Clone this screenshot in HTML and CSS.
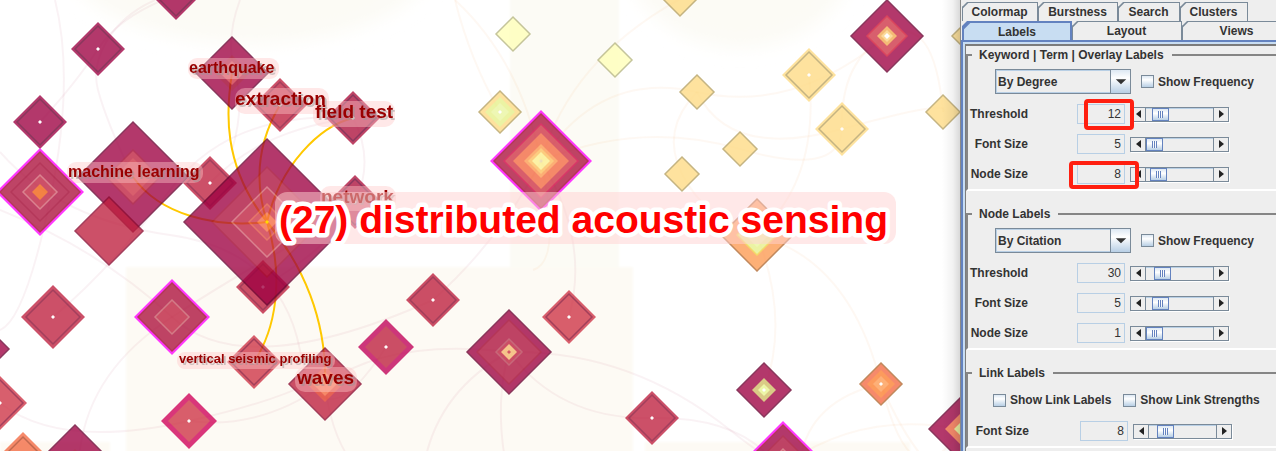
FILE: index.html
```html
<!DOCTYPE html>
<html lang="en">
<head>
<meta charset="utf-8">
<title>Keyword network</title>
<link rel="stylesheet" href="styles.css">
</head>
<body>
<main class="graph">
<svg class="network" xmlns="http://www.w3.org/2000/svg" role="img" aria-label="Keyword network">
  <defs>
    <filter id="soft"><feGaussianBlur stdDeviation="9"/></filter>
    <filter id="edge"><feGaussianBlur stdDeviation="1"/></filter>
  </defs>
  <g class="region">
    <ellipse cx="250" cy="-50" rx="190" ry="94" filter="url(#soft)"/>
    <ellipse cx="740" cy="-60" rx="120" ry="108" filter="url(#soft)"/>
    <rect x="510" y="-5" width="109" height="275" filter="url(#edge)"/>
    <rect class="warm" x="126" y="267" width="507" height="200" filter="url(#edge)"/>
    <rect class="warm" x="645" y="442" width="265" height="20" filter="url(#edge)"/>
    <rect class="warm" x="0" y="442" width="110" height="20" filter="url(#edge)"/>
  </g>
  <g class="faint">
    <path d="M55 0Q75 80 50 200T0 330"/>
    <path d="M155 0C110 20 90 60 98 90S120 150 133 177"/>
    <path d="M176 -5Q120 15 98 49T40 122"/>
    <path d="M240 0Q225 40 235 73T232 150"/>
    <path d="M0 152Q60 220 170 235T300 350T386 347"/>
    <path d="M0 210Q100 250 172 317T433 300"/>
    <path d="M53 317Q110 270 170 190T353 118"/>
    <path d="M80 450Q90 370 172 317T320 230"/>
    <path d="M0 403Q60 450 189 421T340 360"/>
    <path d="M189 421Q260 430 325 384T509 352"/>
    <path d="M325 384Q330 430 350 460"/>
    <path d="M509 352Q440 390 425 460"/>
    <path d="M509 352Q560 420 652 418T780 470"/>
    <path d="M509 352Q630 350 730 430T860 470"/>
    <path d="M433 300Q500 240 541 161"/>
    <path d="M569 317Q590 240 541 161"/>
    <path d="M509 352Q495 400 505 460"/>
    <path d="M353 118Q375 160 355 202T263 287"/>
    <path d="M210 183Q260 130 353 118"/>
  </g>
  <g class="faint pale">
    <path d="M455 0Q470 60 500 112"/>
    <path d="M455 0Q520 60 541 161T533 270"/>
    <path d="M541 161Q570 60 680 -1"/>
    <path d="M541 161Q640 120 740 149T842 129"/>
    <path d="M541 161Q600 70 697 92T887 36"/>
    <path d="M697 92Q660 130 682 174T757 235"/>
    <path d="M697 92Q730 160 842 129T943 112"/>
    <path d="M809 75Q820 180 757 235"/>
    <path d="M757 235Q790 320 764 390"/>
    <path d="M842 129Q840 60 887 36T943 112"/>
    <path d="M757 235Q850 260 881 384T960 429"/>
    <path d="M881 384Q810 400 800 460"/>
    <path d="M783 466Q860 410 960 429"/>
    <path d="M881 384Q900 430 925 460"/>
  </g>
  <g class="strong">
    <path d="M232 73C226 110 222 165 267 222"/>
    <path d="M280 105Q247 160 267 222"/>
    <path d="M353 118C320 126 280 165 267 222"/>
    <path d="M133 177C160 215 215 228 267 222"/>
    <path d="M254 362C275 330 285 280 267 222"/>
    <path d="M325 384C327 320 303 265 267 222"/>
  </g>
  <g id="nodes"></g>
  <g class="pill">
    <rect x="188" y="58" width="91" height="21" rx="9"/>
    <rect x="235" y="88" width="94" height="26" rx="10"/>
    <rect x="313" y="101" width="82" height="26" rx="10"/>
    <rect x="320" y="186" width="76" height="25" rx="10"/>
    <rect x="67" y="162" width="136" height="21" rx="9"/>
    <rect x="177" y="352" width="158" height="17" rx="8"/>
    <rect x="295" y="367" width="62" height="25" rx="10"/>
  </g>
  <g class="term">
    <text class="t16" x="189" y="73">earthquake</text>
    <text class="t19" x="235" y="105">extraction</text>
    <text class="t19" x="315" y="118">field test</text>
    <text class="t19" x="321" y="203">network</text>
    <text class="t16" x="68" y="177">machine learning</text>
    <text class="t13" x="179" y="363">vertical seismic profiling</text>
    <text class="t19" x="297" y="384">waves</text>
  </g>
  <rect class="focus-pill" x="275" y="192" width="621" height="52" rx="12"/>
  <text class="focus" x="279" y="233">(27) distributed acoustic sensing</text>
</svg>
</main>

<aside class="panel">
  <nav class="tabs">
    <div class="tab-row">
      <button class="tab w-colormap">Colormap</button><button class="tab w-burst">Burstness</button><button class="tab w-search">Search</button><button class="tab w-clusters">Clusters</button>
    </div>
    <div class="tab-row">
      <button class="tab w-wide selected">Labels</button><button class="tab w-wide">Layout</button><button class="tab w-wide">Views</button>
    </div>
  </nav>
  <div class="sheet">
    <fieldset class="group">
      <legend>Keyword | Term | Overlay Labels</legend>
      <div class="mode">
        <span class="combo"><select aria-label="Term label mode"><option>By Degree</option></select><svg viewBox="0 0 20 23"><path d="M5 9h11l-5.500 5.500z"/></svg></span>
        <label class="check"><input type="checkbox">Show Frequency</label>
      </div>
      <div class="row"><label for="a1">Threshold</label><input class="num" id="a1" value="12"><span class="slider"><button class="prev" aria-label="Less"></button><input type="range" min="0" max="51" value="6" aria-label="Threshold"><button class="next" aria-label="More"></button></span><span class="mark mark-a"></span></div>
      <div class="row"><label for="a2">Font Size</label><input class="num" id="a2" value="5"><span class="slider"><button class="prev" aria-label="Less"></button><input type="range" min="0" max="51" value="0" aria-label="Font Size"><button class="next" aria-label="More"></button></span></div>
      <div class="row"><label for="a3">Node Size</label><input class="num" id="a3" value="8"><span class="slider"><button class="prev" aria-label="Less"></button><input type="range" min="0" max="51" value="4" aria-label="Node Size"><button class="next" aria-label="More"></button></span><span class="mark mark-b"></span></div>
    </fieldset>
    <fieldset class="group">
      <legend>Node Labels</legend>
      <div class="mode">
        <span class="combo"><select aria-label="Node label mode"><option>By Citation</option></select><svg viewBox="0 0 20 23"><path d="M5 9h11l-5.500 5.500z"/></svg></span>
        <label class="check"><input type="checkbox">Show Frequency</label>
      </div>
      <div class="row"><label for="b1">Threshold</label><input class="num" id="b1" value="30"><span class="slider"><button class="prev" aria-label="Less"></button><input type="range" min="0" max="51" value="8" aria-label="Threshold"><button class="next" aria-label="More"></button></span></div>
      <div class="row"><label for="b2">Font Size</label><input class="num" id="b2" value="5"><span class="slider"><button class="prev" aria-label="Less"></button><input type="range" min="0" max="51" value="6" aria-label="Font Size"><button class="next" aria-label="More"></button></span></div>
      <div class="row"><label for="b3">Node Size</label><input class="num" id="b3" value="1"><span class="slider"><button class="prev" aria-label="Less"></button><input type="range" min="0" max="51" value="0" aria-label="Node Size"><button class="next" aria-label="More"></button></span></div>
    </fieldset>
    <fieldset class="group links">
      <legend>Link Labels</legend>
      <div class="checks">
        <label class="check"><input type="checkbox">Show Link Labels</label>
        <label class="check"><input type="checkbox">Show Link Strengths</label>
      </div>
      <div class="row"><label for="c1">Font Size</label><input class="num" id="c1" value="8"><span class="slider"><button class="prev" aria-label="Less"></button><input type="range" min="0" max="51" value="8" aria-label="Font Size"><button class="next" aria-label="More"></button></span></div>
    </fieldset>
  </div>
</aside>
<script src="nodes.js"></script>
</body>
</html>
```
FILE: styles.css
```css
* { box-sizing: border-box; }
body {
  margin: 0;
  min-height: 100vh;
  display: flex;
  overflow: hidden;
  background: #fff;
  font: bold 12px/14px "Liberation Sans", Arial, sans-serif;
  color: #333;
}
button, input, select { font: inherit; color: inherit; margin: 0; border-radius: 0; }

/* network canvas */
.graph { flex: 1; min-width: 0; position: relative; overflow: hidden; }
.graph::after {
  content: "";
  position: absolute;
  top: 0;
  right: 0;
  bottom: 0;
  width: 18px;
  background: linear-gradient(to right, rgba(0,0,0,0), rgba(0,0,0,.05) 60%, rgba(0,0,0,.15));
}
.network { position: absolute; inset: 0; width: 100%; height: 100%; }
.region { fill: #fcfbf5; }
.region .warm { fill: #fdfaf4; }
.faint, .strong { fill: none; }
.faint { stroke: #9e0142; stroke-opacity: .05; stroke-width: 2; }
.pale { stroke: #f5a060; stroke-opacity: .08; }
.strong { stroke: #ffc800; stroke-width: 2; }
.node { opacity: .78; stroke-width: 1.5px; }
.pill { fill: #ffc8c8; fill-opacity: .42; }
.term { font-weight: bold; fill: #990000; filter: drop-shadow(2px 2px 0 rgba(150,150,150,.5)); }
.t13 { font-size: 13px; }
.t16 { font-size: 16px; }
.t19 { font-size: 19px; }
.focus-pill { fill: #ffd2d2; fill-opacity: .5; }
.focus {
  font-size: 39px;
  fill: #f00;
  stroke: #fff;
  stroke-width: 9px;
  stroke-linejoin: round;
  paint-order: stroke;
}

/* control panel */
.panel { flex: 0 0 316px; overflow: hidden; background: #eee; border-left: 1px solid #8a8a8a; display: flex; flex-direction: column; }
.tabs { padding: 2px 0 0 1px; }
.tab-row { display: flex; }
.tab {
  flex: none;
  height: 19px;
  padding: 0;
  border: 1px solid #7a8a99;
  border-width: 1px 1px 0 0;
  clip-path: polygon(5px 0, 100% 0, 100% 100%, 0 100%, 0 5px);
  box-shadow: inset 1px 0 #7a8a99;
  background: linear-gradient(135deg, #7a8a99 0 4px, #eee 5px);
}
.tab.selected { background: linear-gradient(135deg, #6382bf 0 4px, #c8ddf2 5px); border: 2px solid #6382bf; border-bottom: 0; box-shadow: none; }
.w-colormap { width: 76px; }
.w-burst { width: 80px; }
.w-search { width: 62px; }
.w-clusters { width: 68px; }
.w-wide { width: 110px; }
.sheet {
  flex: 1;
  border-top: 2px solid #6382bf;
  border-left: 2px solid #6382bf;
  box-shadow: inset 2px 2px #c8ddf2, inset 3px 4px #7b7b7b;
  padding: 6px 0 0 3px;
}
.group {
  margin: 0 0 16px;
  min-width: 0;
  padding: 7px 0 0;
  border: 2px solid #858585;
  border-right: 0;
  border-bottom-color: #fff;
}
.group legend { margin-left: 4px; padding: 0 8px 0 7px; }
.mode { display: flex; align-items: center; gap: 10px; padding-left: 27px; margin-bottom: 5px; }
.combo { display: grid; grid-template-columns: 114px 20px; width: 136px; height: 25px; border: 1px solid #7a8a99; }
.combo select {
  grid-area: 1 / 1 / 2 / 3;
  appearance: none;
  background: #eee;
  border: 1px solid #b8cfe5;
  padding: 0 1px;
}
.combo svg {
  grid-area: 1 / 2;
  width: 20px;
  height: 23px;
  pointer-events: none;
  z-index: 1;
  border-left: 1px solid #7a8a99;
  background: linear-gradient(#dde8f3, #fff 35%, #b8cfe5);
  fill: #333;
}
.check { display: flex; align-items: center; gap: 4px; white-space: nowrap; }
.check input {
  appearance: none;
  width: 13px;
  height: 13px;
  border: 1px solid #7a8a99;
  background: linear-gradient(#dde8f3, #fff 35%, #b8cfe5);
}
.row {
  position: relative;
  display: grid;
  grid-template-columns: 109px 53px 99px;
  align-items: center;
  height: 30px;
}
.row label { padding-right: 49px; text-align: right; }
.num {
  width: 48px;
  height: 20px;
  padding: 0 3px;
  border: 1px solid #b8cfe5;
  background: #eee;
  font-weight: normal;
  text-align: right;
}
.slider { display: flex; height: 15px; border: 1px solid #7a8a99; box-shadow: 1px 1px #fff; }
.slider button { flex: 0 0 14px; padding: 0; border: 0; background: #eee; display: grid; place-items: center; }
.slider button::before { content: ""; border: solid transparent; border-width: 4px 5px 4px 0; border-right-color: #222; }
.slider .next::before { border-width: 4px 0 4px 5px; border-left-color: #222; }
.slider input {
  appearance: none;
  flex: 1;
  min-width: 0;
  height: 13px;
  background: #eee;
  border: solid #7a8a99;
  border-width: 0 1px;
  box-shadow: inset 0 1px #b8cfe5;
}
.slider input::-webkit-slider-thumb {
  appearance: none;
  width: 17px;
  height: 13px;
  border: 1px solid #6382bf;
  background:
    repeating-linear-gradient(to right, #6382bf 0 1px, rgba(255,255,255,.7) 1px 2px) center / 5px 7px no-repeat,
    linear-gradient(#dde8f3, #fff 40%, #b8cfe5);
}
.mark { position: absolute; border: 4px solid #ff1f10; border-radius: 4px; pointer-events: none; }
.mark-a { left: 116px; top: 0; width: 50px; height: 31px; }
.mark-b { left: 101px; top: 2px; width: 70px; height: 28px; }
.links .checks { display: flex; gap: 12px; padding: 6px 0 9px 25px; }
.links .row { padding-left: 3px; }
.links .row label { padding-right: 51px; }
```
FILE: nodes.js
```js
const WINE = '#9e0142', PLUM = '#ad103c', ROSE = '#be1f3e', CORAL = '#ce3345', ORANGE = '#f46a42';
const AMBER = '#fd9a52', SAND = '#fedb84', PALE = '#ffffb8', LIME = '#e6f08a', PINK = '#ff00ff', WHITE = '#fff';
const DARK = '#6a0030', BROWN = '#8a0a30', TAN = '#b5a060', RED = '#a0002c';

// each ring: [half diagonal, fill, outline]
const plain = (fill, line) => [[27, fill], [23, fill, line], [2, WHITE]];
const nodes = [
  [176, -7, plain(WINE, DARK)], [98, 49, plain(WINE, DARK)], [40, 122, plain(WINE, DARK)],
  [40, 192, [[44, PINK], [40, PLUM, RED], [29, PLUM, RED], [17, ROSE, '#d06070'], [8, '#f06010']]],
  [280, 105, plain(ROSE, BROWN)],
  [232, 73, [[36, WINE, DARK], [18, RED], [12, CORAL]]],
  [210, 183, plain(ROSE, BROWN)],
  [133, 177, [[55, WINE, DARK], [27, ROSE, RED], [19, CORAL]]],
  [109, 231, [[34, ROSE, BROWN]]],
  [353, 118, plain(PLUM, DARK)], [355, 202, plain(PLUM, DARK)],
  [263, 287, plain(ROSE, BROWN)],
  [267, 222, [[83, WINE, DARK], [55, PLUM, RED], [35, ROSE, '#d06070'], [18, CORAL, '#e05040'], [10, ORANGE], [2, '#ffe000']]],
  [53, 317, [[32, ROSE], [27, ROSE, BROWN], [2, WHITE]]],
  [172, 317, [[38, PINK], [34, PLUM, RED], [17, ROSE, '#c85868']]],
  [254, 362, plain(CORAL, BROWN)],
  [325, 384, [[36, ROSE, BROWN], [18, '#e03828'], [12, ORANGE]]],
  [189, 421, [[28, '#d00058'], [21, CORAL], [2, WHITE]]],
  [386, 347, [[28, '#c00058'], [21, ROSE], [2, WHITE]]],
  [433, 300, plain(ROSE, BROWN)], [569, 317, plain(CORAL, BROWN)],
  [509, 352, [[42, WINE, DARK], [32, PLUM, RED], [13, ROSE, '#b84058'], [8, '#f5b870'], [2, CORAL]]],
  [-18, 349, [[27, WINE, DARK]]], [0, 403, plain(CORAL, BROWN)],
  [-20, 466, [[27, WINE, DARK]]], [23, 460, [[28, ORANGE], [23, ORANGE, '#b04020']]],
  [75, 461, [[36, WINE, DARK], [12, RED]]],
  [513, 34, [[17, PALE, '#b5b580']]], [615, 60, [[17, PALE, '#b5b580']]],
  [500, 112, [[21, SAND, TAN], [15, LIME], [9, '#eaf5a0'], [2, WHITE]]],
  [541, 161, [[51, PINK], [47, PLUM, RED], [37, CORAL, '#d00040'], [28, ORANGE], [17, AMBER], [13, '#fdc060'], [9, '#fdf090'], [2, '#eee0b0']]],
  [680, -1, [[17, SAND, TAN]]], [697, 92, [[17, SAND, TAN]]], [740, 149, [[17, SAND, TAN]]],
  [682, 174, [[17, SAND, TAN]]], [943, 112, [[17, SAND, TAN]]], [969, 36, [[17, SAND, TAN]]],
  [809, 75, plain(SAND, TAN)], [842, 129, plain(SAND, TAN)],
  [887, 36, [[36, WINE, DARK], [20, CORAL, '#d01030'], [10, '#f2a850'], [6, '#fbd080'], [3, WHITE]]],
  [757, 235, [[36, AMBER, '#b06830'], [20, LIME, '#f0d040'], [12, '#eaf5a0']]],
  [764, 390, [[27, WINE, DARK], [12, '#d0bd65'], [6, '#e8f590'], [2, WHITE]]],
  [881, 384, [[21, ORANGE, '#b06830'], [14, '#fc8030'], [8, AMBER], [2, WHITE]]],
  [652, 418, plain(ROSE, BROWN)],
  [783, 466, [[45, PINK], [41, WINE, RED], [30, PLUM, RED], [17, ROSE, '#d06070']]],
  [960, 429, [[31, WINE, DARK], [15, ORANGE], [6, LIME]]]
];

const NS = 'http://www.w3.org/2000/svg';
const layer = document.getElementById('nodes');
for (const [x, y, rings] of nodes) {
  const group = document.createElementNS(NS, 'g');
  group.setAttribute('class', 'node');
  for (const [r, fill, line] of rings) {
    const ring = document.createElementNS(NS, 'path');
    ring.setAttribute('d', `M${x} ${y - r}L${x + r} ${y}L${x} ${y + r}L${x - r} ${y}Z`);
    ring.setAttribute('fill', fill);
    if (line) ring.setAttribute('stroke', line);
    group.append(ring);
  }
  layer.append(group);
}
```
